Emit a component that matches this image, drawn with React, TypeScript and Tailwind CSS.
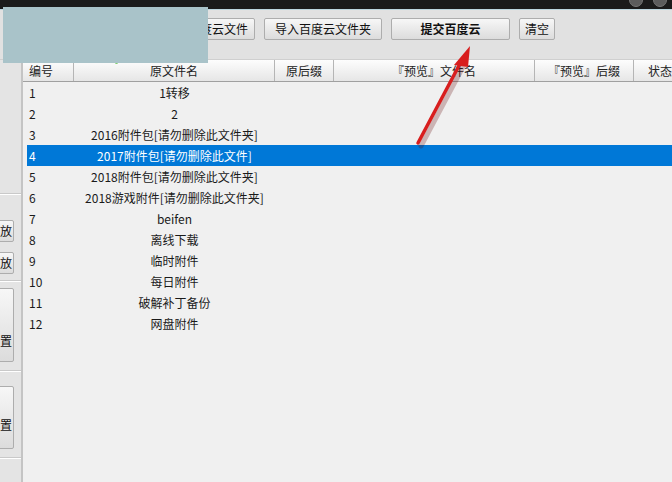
import React from 'react';

const rows = [
  '1转移',
  '2',
  '2016附件包[请勿删除此文件夹]',
  '2017附件包[请勿删除此文件]',
  '2018附件包[请勿删除此文件夹]',
  '2018游戏附件[请勿删除此文件夹]',
  'beifen',
  '离线下载',
  '临时附件',
  '每日附件',
  '破解补丁备份',
  '网盘附件',
];

const columns = [
  { title: '编号', w: 'w-[51px]', align: 'justify-start pl-[6px]' },
  { title: '原文件名', w: 'w-[201px]', align: 'justify-center' },
  { title: '原后缀', w: 'w-[59px]', align: 'justify-center' },
  { title: '『预览』文件名', w: 'w-[201px]', align: 'justify-center' },
  { title: '『预览』后缀', w: 'w-[99px]', align: 'justify-center' },
  { title: '状态', w: 'w-[60px]', align: 'justify-start pl-[14px]' },
];

const btn =
  'h-[22px] flex items-center justify-center border border-[#adadad] rounded-[2px] bg-gradient-to-b from-[#f7f7f7] to-[#dcdcdc] text-[12px] text-[#111] shrink-0';

const App = () => {
  const selected = 3;

  return (
    <div
      className="relative w-[672px] h-[482px] overflow-hidden bg-[#f0f0f0] flex flex-col"
      style={{ fontFamily: '"Noto Sans CJK SC", "Noto Sans", sans-serif' }}
    >
      {/* Window title bar */}
      <div className="h-[9px] bg-[#1b1b1b] flex justify-end gap-[10px] pr-[5px] overflow-hidden shrink-0">
        <div className="w-[14px] h-[14px] -mt-[7px] rounded-full bg-[#5c5c5c] border border-[#777]" />
        <div className="w-[14px] h-[14px] -mt-[7px] rounded-full bg-[#5c5c5c] border border-[#777]" />
      </div>
      <div className="h-[1px] bg-[#bcd6df] shrink-0" />

      {/* Toolbar */}
      <div className="h-[50px] bg-[#e1e1e1] border-b border-[#cfcfcf] flex items-start pt-[8px] gap-[9px] shrink-0">
        <div className={`${btn} w-[135px] ml-[120px] !justify-end pr-[6px]`}>导出百度云文件</div>
        <div className={`${btn} w-[118px]`}>导入百度云文件夹</div>
        <div className={`${btn} w-[119px] font-bold`}>提交百度云</div>
        <div className={`${btn} w-[36px]`}>清空</div>
      </div>

      <div className="flex flex-1 min-h-0">
        {/* Left side panel */}
        <div className="w-[23px] shrink-0 bg-[#e4e4e4] border-r-2 border-[#c4c4c4] flex flex-col overflow-hidden">
          <div className="h-[134px] border-b border-[#c9c9c9] shrink-0" />
          <div className="h-[87px] border-b border-[#c9c9c9] border-t border-t-white shrink-0 flex flex-col items-end gap-[10px] pt-[25px] pr-[7px]">
            <div className={`${btn} w-[40px] !justify-end pr-[1px]`}>释放</div>
            <div className={`${btn} w-[40px] !justify-end pr-[1px]`}>释放</div>
          </div>
          <div className="h-[90px] border-b border-[#c9c9c9] border-t border-t-white shrink-0 flex flex-col items-end pt-[6px] pr-[7px]">
            <div className={`${btn} w-[40px] !h-[74px] !justify-end pr-[1px] pt-[32px]`}>设置</div>
          </div>
          <div className="h-[87px] border-b border-[#c9c9c9] border-t border-t-white shrink-0 flex flex-col items-end pt-[14px] pr-[7px]">
            <div className={`${btn} w-[40px] !h-[63px] !justify-end pr-[1px] pt-[14px]`}>设置</div>
          </div>
          <div className="flex-1 border-t border-t-white" />
        </div>

        {/* File list */}
        <div className="flex-1 flex flex-col min-w-0">
          <div className="h-[22px] flex bg-gradient-to-b from-[#fdfdfd] to-[#e6e6e6] border-b border-[#a0a0a0] shrink-0">
            {columns.map((c, i) => (
              <div
                key={c.title}
                className={`relative ${c.w} shrink-0 flex items-center ${c.align} border-r border-[#b5b5b5] text-[12px] text-[#222]`}
              >
                {i === 1 && <span className="absolute left-[41px] top-[1px] w-[3px] h-[3px] rounded-full bg-[#7ccf6a]" />}
                {c.title}
              </div>
            ))}
          </div>

          <div className="flex flex-col pl-[4px]">
            {rows.map((name, i) => (
              <div
                key={name}
                className={`h-[21px] flex items-center text-[12px] ${
                  i === selected ? 'bg-[#0078d7] text-white' : 'text-[#1a1a1a]'
                }`}
              >
                <div className="w-[47px] pl-[2px]">{i + 1}</div>
                <div className="w-[201px] text-center">{name}</div>
              </div>
            ))}
          </div>
        </div>
      </div>

      {/* Redaction block */}
      <div className="absolute left-[3px] top-[7px] w-[205px] h-[56px] bg-[#a9c3c9]" />

      {/* Annotation arrow */}
      <svg className="absolute left-0 top-0 pointer-events-none" width="672" height="482">
        <line x1="421" y1="146" x2="465" y2="63" stroke="#5a0000" strokeOpacity="0.25" strokeWidth="5" strokeLinecap="round" />
        <line x1="418" y1="143" x2="462" y2="60" stroke="#d81e1e" strokeWidth="3.5" strokeLinecap="round" />
        <polygon points="470,46 454,65 468,67" fill="#d81e1e" />
      </svg>
    </div>
  );
};

export default App;
